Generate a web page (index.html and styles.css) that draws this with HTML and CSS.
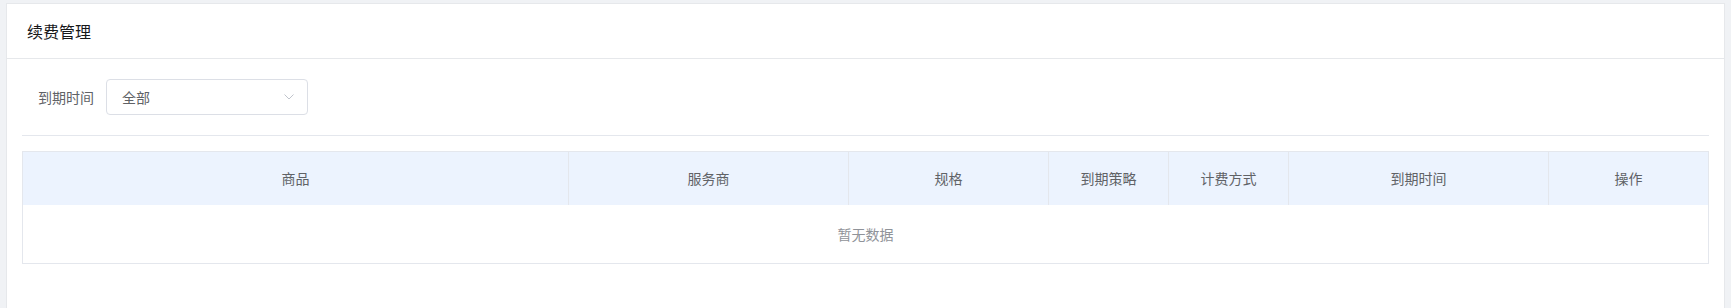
FILE: index.html
```html
<!DOCTYPE html>
<html>

<head>
  <meta charset="utf-8">
  <title>续费管理</title>
  <link rel="stylesheet" href="styles.css">
</head>

<body>
  <div class="card">
    <div class="card-header">续费管理</div>

    <div class="card-body">
      <!-- Filter bar -->
      <div class="filter-row">
        <span class="filter-label">到期时间</span>
        <div class="select">
          <span class="select-value">全部</span>
          <svg class="select-arrow" viewBox="0 0 10 6" fill="none" stroke="currentColor" stroke-width="1">
            <polyline points="0.5,0.5 5,5 9.5,0.5"></polyline>
          </svg>
        </div>
      </div>

      <div class="divider"></div>

      <table class="data-table">
        <colgroup>
          <col>
          <col style="width: 280px">
          <col style="width: 200px">
          <col style="width: 120px">
          <col style="width: 120px">
          <col style="width: 260px">
          <col style="width: 160px">
        </colgroup>
        <thead>
          <tr>
            <th>商品</th>
            <th>服务商</th>
            <th>规格</th>
            <th>到期策略</th>
            <th>计费方式</th>
            <th>到期时间</th>
            <th>操作</th>
          </tr>
        </thead>
        <tbody>
          <tr>
            <td class="empty" colspan="7">暂无数据</td>
          </tr>
        </tbody>
      </table>
    </div>
  </div>
</body>

</html>
```

FILE: styles.css
```css
* {
  box-sizing: border-box;
}

body {
  margin: 0;
  padding: 3px 6px 0 6px;
  background-color: #f0f2f5;
  font-family: "Noto Sans CJK SC", "Microsoft YaHei", sans-serif;
  font-size: 14px;
  color: #606266;
  overflow: hidden;
}

.card {
  background-color: #ffffff;
  border: 1px solid #e6e8eb;
  min-height: 100vh;
}

.card-header {
  height: 55px;
  padding-left: 20px;
  display: flex;
  align-items: center;
  border-bottom: 1px solid #e6e8eb;
  font-size: 16px;
  color: #17181a;
}

.card-body {
  padding: 20px 15px 40px 15px;
}

.filter-row {
  display: flex;
  align-items: center;
  padding-left: 16px;
}

.filter-label {
  margin-right: 12px;
  color: #606266;
}

.select {
  width: 202px;
  height: 36px;
  border: 1px solid #dcdfe6;
  border-radius: 4px;
  display: flex;
  align-items: center;
  justify-content: space-between;
  padding: 0 13px 0 15px;
  color: #606266;
}

.select-arrow {
  width: 10px;
  height: 6px;
  color: #c0c4cc;
}

.divider {
  height: 1px;
  background-color: #e4e7ed;
  margin: 20px 0 15px 0;
}

.data-table {
  width: 100%;
  border-collapse: collapse;
  table-layout: fixed;
  border: 1px solid #e4e7ed;
}

.data-table th {
  height: 53px;
  background-color: #ecf3fe;
  font-weight: normal;
  color: #606266;
  text-align: center;
  border-right: 1px solid #e4e7ed;
  padding: 0;
}

.data-table th:last-child {
  border-right: none;
}

.data-table .empty {
  height: 59px;
  text-align: center;
  color: #909399;
}
```
